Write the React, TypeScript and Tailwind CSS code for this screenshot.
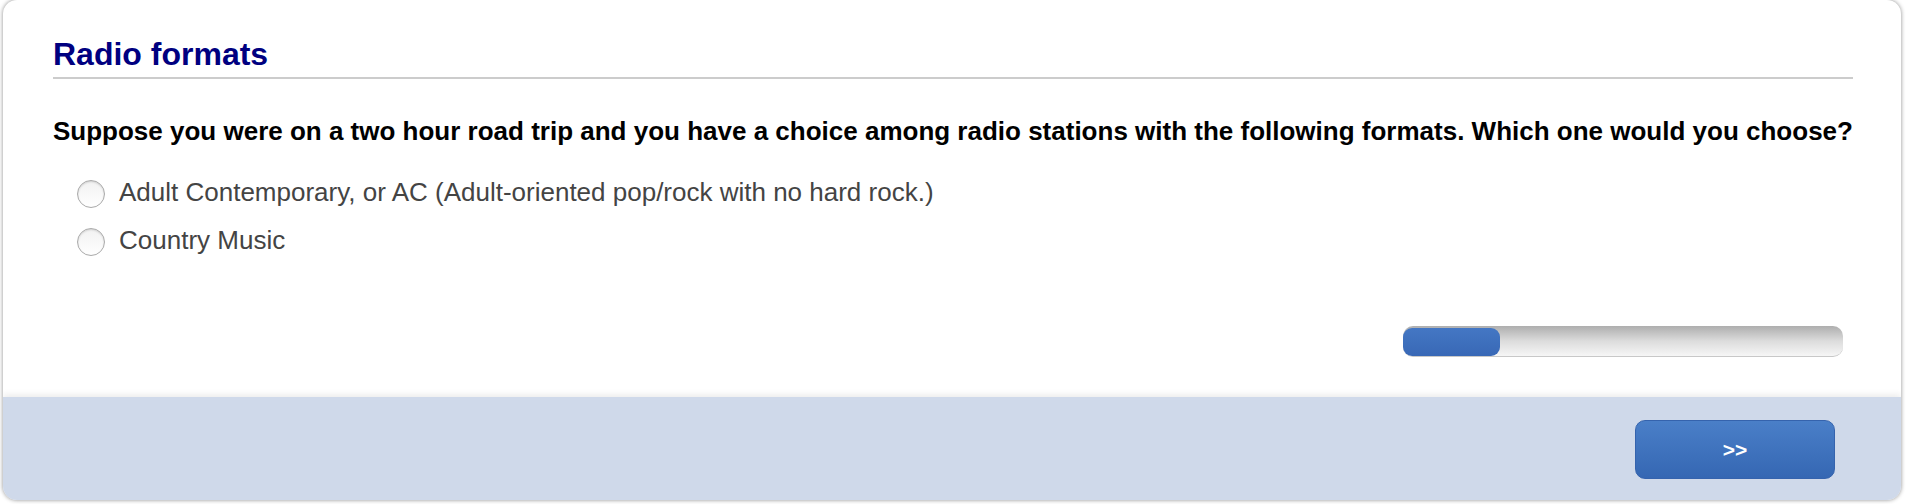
import React from "react";

const options = [
  "Adult Contemporary, or AC (Adult-oriented pop/rock with no hard rock.)",
  "Country Music",
];

const App = () => {
  return (
    <div className="w-[1908px] h-[504px] bg-white pl-[3px] font-['Liberation_Sans',Arial,sans-serif]">
      <div className="w-[1898px] h-[500px] rounded-[14px] bg-white overflow-hidden shadow-[0_0_4px_rgba(0,0,0,0.45)] flex flex-col">
        {/* question area */}
        <div className="h-[397px] pl-[50px] pr-[48px] pt-[36px]">
          <h2 className="text-[32px] leading-[37px] font-bold text-[#000080] pb-[4px] border-b-2 border-[#cccccc]">
            Radio formats
          </h2>
          <p className="mt-[37px] text-[26px] leading-[30px] font-bold text-black whitespace-nowrap">
            Suppose you were on a two hour road trip and you have a choice among radio stations with the following formats. Which one would you choose?
          </p>
          <div className="mt-[31px] flex flex-col gap-[18px] pl-[24px]">
            {options.map((opt) => (
              <label key={opt} className="flex items-start h-[30px]">
                <span className="mt-[3px] w-[28px] h-[28px] rounded-full border border-[#aaaaaa] bg-gradient-to-b from-[#f2f2f2] to-white shadow-[inset_0_1px_2px_rgba(0,0,0,0.15)]" />
                <span className="ml-[14px] text-[26px] leading-[30px] text-[#444444]">{opt}</span>
              </label>
            ))}
          </div>
          <div className="mt-[71px] flex justify-end pr-[10px]">
            <div className="w-[440px] h-[31px] rounded-[10px] bg-gradient-to-b from-[#aeaeae] via-[#dcdcdc] to-[#f6f6f6] border-b border-[#c8c8c8] pt-[2px]">
              <div className="w-[97px] h-[28px] rounded-[9px] bg-gradient-to-b from-[#4477c4] to-[#3868b6]" />
            </div>
          </div>
        </div>
        {/* footer */}
        <div className="h-[103px] bg-[#cfd9ea] shadow-[0_-3px_6px_rgba(0,0,0,0.07)] flex items-center justify-end pr-[66px] pt-[2px]">
          <button className="w-[200px] h-[59px] rounded-[10px] border border-[#3563ad] bg-gradient-to-b from-[#4a7fc8] to-[#3567b3] text-white text-[21px] font-bold">
            &gt;&gt;
          </button>
        </div>
      </div>
    </div>
  );
};

export default App;
